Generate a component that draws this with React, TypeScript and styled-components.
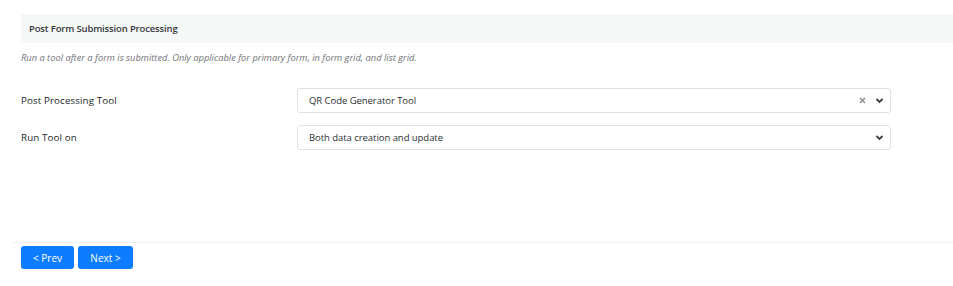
import styled, { createGlobalStyle } from "styled-components";

const GlobalStyle = createGlobalStyle`
  body {
    margin: 0;
    background: #ffffff;
    font-family: "Open Sans", "Noto Sans", sans-serif;
    color: #212529;
  }
`;

const Page = styled.div`
  width: 953px;
  height: 286px;
  padding-top: 14px;
  box-sizing: border-box;
`;

const SectionHeader = styled.div`
  margin-left: 21px;
  height: 29px;
  background: #f6f7f7;
  display: flex;
  align-items: center;
  padding-left: 8px;
  font-size: 9.5px;
  font-weight: 600;
  letter-spacing: -0.15px;
  color: #33373b;
`;

const Hint = styled.p`
  margin: 8px 0 0 21px;
  font-size: 9.3px;
  font-style: italic;
  color: #6f7377;
  line-height: 13px;
`;

const Form = styled.div`
  margin: 24px 0 0 21px;
  display: flex;
  flex-direction: column;
  gap: 12px;
  height: 154px;
`;

const Row = styled.div`
  display: flex;
  align-items: center;
`;

const Label = styled.label`
  width: 276px;
  font-size: 9.8px;
  letter-spacing: 0.1px;
  color: #212529;
`;

const SelectBox = styled.div`
  width: 594px;
  height: 25px;
  box-sizing: border-box;
  border: 1px solid #dfe2e5;
  border-radius: 3px;
  display: flex;
  align-items: center;
  padding: 0 6px 0 11px;
  font-size: 9.5px;
  letter-spacing: -0.05px;
  color: #2b2f33;
`;

const Value = styled.span`
  flex: 1;
`;

const Clear = styled.svg`
  margin-right: 9px;
`;

const Footer = styled.div`
  margin-left: 13px;
  border-top: 1px solid #eeeff0;
  padding: 3px 0 0 8px;
  display: flex;
  gap: 4px;
`;

const NavButton = styled.button<{ $w: number }>`
  width: ${(p) => p.$w}px;
  height: 23px;
  border: none;
  border-radius: 3px;
  background: #0d7cff;
  color: #ffffff;
  font-family: "Open Sans", "Noto Sans", sans-serif;
  font-size: 10px;
  padding: 0;
`;

function Chevron() {
  return (
    <svg width="9" height="7" viewBox="0 0 9 7">
      <path d="M1.5 2 L4.5 5 L7.5 2" fill="none" stroke="#3a3e42" strokeWidth="1.8" />
    </svg>
  );
}

function ClearIcon() {
  return (
    <Clear width="7" height="7" viewBox="0 0 7 7">
      <path d="M1 1 L6 6 M6 1 L1 6" fill="none" stroke="#8a8d90" strokeWidth="1.5" />
    </Clear>
  );
}

export default function App() {
  return (
    <Page>
      <GlobalStyle />
      <SectionHeader>Post Form Submission Processing</SectionHeader>
      <Hint>Run a tool after a form is submitted. Only applicable for primary form, in form grid, and list grid.</Hint>
      <Form>
        <Row>
          <Label>Post Processing Tool</Label>
          <SelectBox>
            <Value>QR Code Generator Tool</Value>
            <ClearIcon />
            <Chevron />
          </SelectBox>
        </Row>
        <Row>
          <Label>Run Tool on</Label>
          <SelectBox>
            <Value>Both data creation and update</Value>
            <Chevron />
          </SelectBox>
        </Row>
      </Form>
      <Footer>
        <NavButton $w={53}>&lt; Prev</NavButton>
        <NavButton $w={55}>Next &gt;</NavButton>
      </Footer>
    </Page>
  );
}
